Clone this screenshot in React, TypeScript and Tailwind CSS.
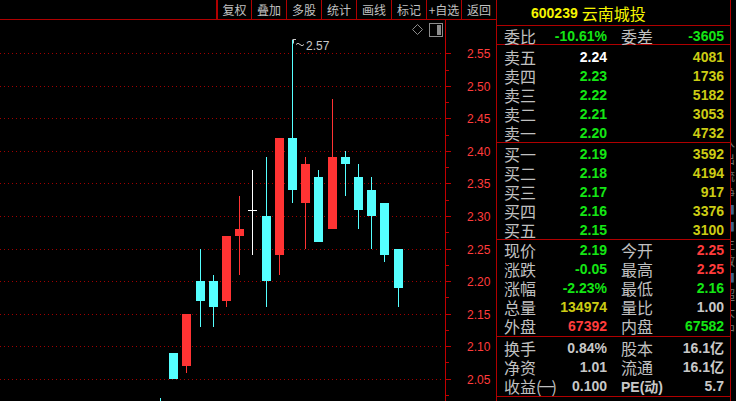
import React from "react";

type Candle = { x: number; c: string; bt: number; bb: number; wt?: number; wb?: number };

const RED = "#ff3333";
const CYAN = "#55ffff";

// page coordinates (the svg starts 20px down, under the toolbar)
const candles: Candle[] = [
  { x: 156, c: CYAN, bt: 404, bb: 420, wt: 398 },
  { x: 169, c: CYAN, bt: 353, bb: 379 },
  { x: 182, c: RED, bt: 314, bb: 366, wb: 373 },
  { x: 196, c: CYAN, bt: 281, bb: 301, wt: 249, wb: 327 },
  { x: 209, c: CYAN, bt: 281, bb: 307, wt: 275, wb: 327 },
  { x: 222, c: RED, bt: 236, bb: 301, wb: 307 },
  { x: 235, c: RED, bt: 229, bb: 236, wt: 196, wb: 275 },
  { x: 262, c: CYAN, bt: 216, bb: 281, wt: 157, wb: 307 },
  { x: 275, c: RED, bt: 138, bb: 255, wb: 275 },
  { x: 288, c: CYAN, bt: 138, bb: 190, wt: 40, wb: 203 },
  { x: 301, c: RED, bt: 164, bb: 203, wt: 157, wb: 249 },
  { x: 314, c: CYAN, bt: 177, bb: 242, wt: 170 },
  { x: 328, c: RED, bt: 157, bb: 229, wt: 99 },
  { x: 341, c: CYAN, bt: 157, bb: 164, wt: 151, wb: 196 },
  { x: 354, c: CYAN, bt: 177, bb: 210, wt: 164, wb: 229 },
  { x: 367, c: CYAN, bt: 190, bb: 216, wt: 177, wb: 249 },
  { x: 380, c: CYAN, bt: 203, bb: 255, wb: 262 },
  { x: 394, c: CYAN, bt: 249, bb: 288, wb: 307 },
];

const grid = [
  { y: 53, t: "2.55" },
  { y: 86, t: "2.50" },
  { y: 118, t: "2.45" },
  { y: 151, t: "2.40" },
  { y: 183, t: "2.35" },
  { y: 216, t: "2.30" },
  { y: 249, t: "2.25" },
  { y: 281, t: "2.20" },
  { y: 314, t: "2.15" },
  { y: 346, t: "2.10" },
  { y: 379, t: "2.05" },
];
const minor = [70, 102, 135, 167, 200, 232, 265, 297, 330, 362, 395];

const lab = "text-[16px] leading-none text-[#c0c0c0] [font-family:'Noto_Sans_CJK_SC',sans-serif]";
const num = "text-[14px] leading-none font-bold [font-family:'Liberation_Sans','Noto_Sans_CJK_SC',sans-serif]";

const G = "text-[#14e614]";
const Y = "text-[#cccc14]";
const R = "text-[#ff3c3c]";
const W = "text-white";
const S = "text-[#c8c8c8]";

function Toolbar() {
  const items = ["复权", "叠加", "多股", "统计", "画线", "标记", "+自选", "返回"];
  return (
    <div className="flex h-[20px] shrink-0 justify-end border-b border-[#b00000]">
      {items.map((t, i) => (
        <div
          key={t}
          className={`flex h-full w-[35px] items-center justify-center border-[#b00000] text-[12px] leading-none text-[#c0c0c0] [font-family:'Noto_Sans_CJK_SC',sans-serif] ${
            i === 0 ? "border-l-2" : "border-l"
          }`}
        >
          {t}
        </div>
      ))}
    </div>
  );
}

function Chart() {
  const o = 20;
  return (
    <svg width="496" height="381" className="block shrink-0">
      {grid.map((g) => (
        <line
          key={g.t}
          x1="0"
          x2="444"
          y1={g.y - o + 0.5}
          y2={g.y - o + 0.5}
          stroke="#a00000"
          strokeDasharray="1 3"
        />
      ))}
      <rect x="445" y="0" width="1" height="381" fill="#c00000" />
      {grid.map((g) => (
        <g key={"t" + g.t}>
          <rect x="446" y={g.y - o} width="5" height="1" fill="#c00000" />
          <text
            x="467"
            y={g.y - o + 0.5}
            dominantBaseline="central"
            fontSize="12"
            fontFamily="Liberation Sans, sans-serif"
            fill="#ff3c3c"
          >
            {g.t}
          </text>
        </g>
      ))}
      {minor.map((y) => (
        <rect key={y} x="446" y={y - o} width="3" height="1" fill="#c00000" />
      ))}

      {candles.map((k) => {
        const wt = k.wt ?? k.bt;
        const wb = k.wb ?? k.bb;
        return (
          <g key={k.x}>
            <rect x={k.x + 4} y={wt - o} width="1" height={wb - wt} fill={k.c} />
            <rect x={k.x} y={k.bt - o} width="9" height={k.bb - k.bt} fill={k.c} />
          </g>
        );
      })}
      {/* doji */}
      <rect x="252" y={170 - o} width="1" height={85} fill="#ffffff" />
      <rect x="248" y={210 - o} width="9" height="1" fill="#ffffff" />

      {/* high marker */}
      <path d="M292.5 19.5 h3.5 M293.5 19.5 v4" stroke="#c8c8c8" strokeWidth="1" />
      <path d="M296 24.5 q2 -2.5 4 0 t4 0" stroke="#c8c8c8" strokeWidth="1" fill="none" />
      <text
        x="306"
        y="26"
        dominantBaseline="central"
        fontSize="12"
        fontFamily="Liberation Sans, sans-serif"
        fill="#c8c8c8"
      >
        2.57
      </text>

      {/* corner icons */}
      <polygon points="417.5,4.5 422.5,9.5 417.5,14.5 412.5,9.5" fill="none" stroke="#8c8c8c" />
      <rect x="429.5" y="3.5" width="13" height="13" fill="none" stroke="#8c8c8c" />
      <rect x="437" y="5" width="4" height="10" fill="#8c8c8c" />
    </svg>
  );
}

type Pair = { l1: React.ReactNode; v1: string; c1: string; l2?: React.ReactNode; v2: string; c2: string };

function PairRow({ l1, v1, c1, l2, v2, c2 }: Pair) {
  return (
    <div className="grid h-[19px] grid-cols-2 items-center gap-x-[14px] pl-[7px] pr-[6px]">
      <div className="flex items-center justify-between">
        <span className={lab}>{l1}</span>
        <span className={`${num} ${c1}`}>{v1}</span>
      </div>
      <div className="flex items-center justify-between">
        <span className={lab}>{l2}</span>
        <span className={`${num} ${c2}`}>{v2}</span>
      </div>
    </div>
  );
}

const sells: Pair[] = [
  { l1: "卖五", v1: "2.24", c1: W, v2: "4081", c2: Y },
  { l1: "卖四", v1: "2.23", c1: G, v2: "1736", c2: Y },
  { l1: "卖三", v1: "2.22", c1: G, v2: "5182", c2: Y },
  { l1: "卖二", v1: "2.21", c1: G, v2: "3053", c2: Y },
  { l1: "卖一", v1: "2.20", c1: G, v2: "4732", c2: Y },
];

const buys: Pair[] = [
  { l1: "买一", v1: "2.19", c1: G, v2: "3592", c2: Y },
  { l1: "买二", v1: "2.18", c1: G, v2: "4194", c2: Y },
  { l1: "买三", v1: "2.17", c1: G, v2: "917", c2: Y },
  { l1: "买四", v1: "2.16", c1: G, v2: "3376", c2: Y },
  { l1: "买五", v1: "2.15", c1: G, v2: "3100", c2: Y },
];

const quote: Pair[] = [
  { l1: "现价", v1: "2.19", c1: G, l2: "今开", v2: "2.25", c2: R },
  { l1: "涨跌", v1: "-0.05", c1: G, l2: "最高", v2: "2.25", c2: R },
  { l1: "涨幅", v1: "-2.23%", c1: G, l2: "最低", v2: "2.16", c2: G },
  { l1: "总量", v1: "134974", c1: Y, l2: "量比", v2: "1.00", c2: S },
  { l1: "外盘", v1: "67392", c1: R, l2: "内盘", v2: "67582", c2: G },
];

const finance: Pair[] = [
  { l1: "换手", v1: "0.84%", c1: S, l2: "股本", v2: "16.1亿", c2: S },
  { l1: "净资", v1: "1.01", c1: S, l2: "流通", v2: "16.1亿", c2: S },
  {
    l1: (
      <>
        收益<span className="tracking-[-3px]">(一)</span>
      </>
    ),
    v1: "0.100",
    c1: S,
    l2: <span className={`${num} ${S}`}>PE(动)</span>,
    v2: "5.7",
    c2: S,
  },
];

function Panel() {
  return (
    <div className="h-[401px] w-[235px] shrink-0 overflow-hidden border-x border-[#b00000]">
      <div className="flex h-[26px] items-center border-b border-[#b00000] pl-[34px]">
        <span className={`${num} text-[#f5f500]`}>600239</span>
        <span className="ml-[4px] text-[16px] leading-none text-[#f5f500] [font-family:'Noto_Sans_CJK_SC',sans-serif]">
          云南城投
        </span>
      </div>
      <div className="h-[19px] border-b border-[#b00000]">
        <PairRow l1="委比" v1="-10.61%" c1={G} l2="委差" v2="-3605" c2={G} />
      </div>
      <div className="border-b border-[#b00000] pt-[2px]">
        {sells.map((p, i) => (
          <PairRow key={i} {...p} />
        ))}
      </div>
      <div className="border-b border-[#b00000] pt-[1px]">
        {buys.map((p, i) => (
          <PairRow key={i} {...p} />
        ))}
      </div>
      <div className="border-b border-[#b00000] pb-[1px]">
        {quote.map((p, i) => (
          <PairRow key={i} {...p} />
        ))}
      </div>
      <div className="border-b border-[#b00000] py-[1px]">
        {finance.map((p, i) => (
          <PairRow key={i} {...p} />
        ))}
      </div>
      <div className="pl-[7px] pt-[2px]">
        <span className={lab}>今日热点 城投概念</span>
      </div>
    </div>
  );
}

function Strip() {
  const marks = ["入", "出", "流", "净", "■", "■", "主", "散", "■", "超", "大", "中"];
  return (
    <div className="flex w-[5px] shrink-0 flex-col overflow-hidden pt-[136px]">
      {marks.map((m, i) => (
        <span
          key={i}
          className={`-ml-[8px] h-[17px] shrink-0 text-[12px] leading-none [font-family:'Noto_Sans_CJK_SC',sans-serif] ${
            m === "■" ? "text-[#3a5f8c]" : "text-[#6e6e6e]"
          }`}
        >
          {m}
        </span>
      ))}
    </div>
  );
}

export default function App() {
  return (
    <div className="flex h-[401px] w-[736px] overflow-hidden bg-black">
      <div className="flex w-[496px] shrink-0 flex-col">
        <Toolbar />
        <Chart />
      </div>
      <Panel />
      <Strip />
    </div>
  );
}
